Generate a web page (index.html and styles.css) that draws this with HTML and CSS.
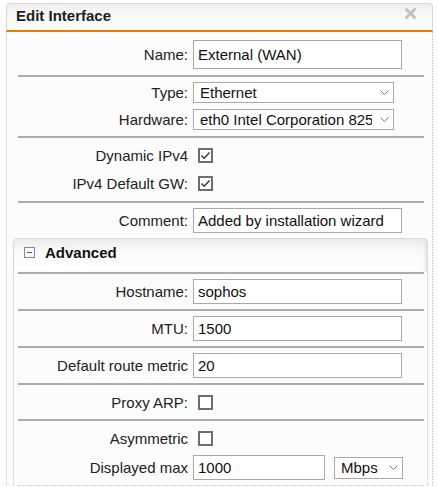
FILE: index.html
```html
<!DOCTYPE html>
<html>
<head>
<meta charset="utf-8">
<link rel="stylesheet" href="styles.css">
</head>
<body>
<div class="dialog">
  <div class="titlebar">
    <span class="title">Edit Interface</span>
    <svg class="close" width="11" height="11" viewBox="0 0 11 11"><path d="M1.5 1.5 L9.5 9.5 M9.5 1.5 L1.5 9.5" stroke="#c2c2c2" stroke-width="3" stroke-linecap="round"/></svg>
  </div>
  <div class="panel">
    <div class="group g-name">
      <div class="row"><label class="lbl">Name:</label><input class="inp inp-name" value="External (WAN)"></div>
    </div>
    <div class="group g-type">
      <div class="row"><label class="lbl">Type:</label>
        <div class="sel sel-type"><select><option>Ethernet</option></select><svg class="chev" width="9" height="5" viewBox="0 0 9 5"><path d="M0.5 0.5 L4.5 4.5 L8.5 0.5" fill="none" stroke="#777" stroke-width="1"/></svg></div>
      </div>
      <div class="row"><label class="lbl">Hardware:</label>
        <div class="sel sel-type"><select><option>eth0 Intel Corporation 82574L Gigabit Network Connection</option></select><svg class="chev" width="9" height="5" viewBox="0 0 9 5"><path d="M0.5 0.5 L4.5 4.5 L8.5 0.5" fill="none" stroke="#777" stroke-width="1"/></svg></div>
      </div>
    </div>
    <div class="group g-checks">
      <div class="row cbrow"><label class="lbl">Dynamic IPv4</label><span class="cb"><svg width="11" height="11" viewBox="0 0 11 11"><path d="M1.5 5.5 L4.2 8.2 L9.5 2.5" fill="none" stroke="#333" stroke-width="1.4"/></svg></span></div>
      <div class="row cbrow"><label class="lbl">IPv4 Default GW:</label><span class="cb"><svg width="11" height="11" viewBox="0 0 11 11"><path d="M1.5 5.5 L4.2 8.2 L9.5 2.5" fill="none" stroke="#333" stroke-width="1.4"/></svg></span></div>
    </div>
    <div class="group g-comment">
      <div class="row"><label class="lbl">Comment:</label><input class="inp inp-wide" value="Added by installation wizard"></div>
    </div>
    <div class="adv">
      <div class="adv-head"><span class="minus"></span><span class="adv-title">Advanced</span></div>
      <div class="adv-body">
        <div class="agroup g-field">
          <div class="row"><label class="lbl">Hostname:</label><input class="inp inp-wide" value="sophos"></div>
        </div>
        <div class="agroup g-field">
          <div class="row"><label class="lbl">MTU:</label><input class="inp inp-wide" value="1500"></div>
        </div>
        <div class="agroup g-field">
          <div class="row"><label class="lbl">Default route metric</label><input class="inp inp-wide" value="20"></div>
        </div>
        <div class="agroup g-proxy">
          <div class="row cbrow"><label class="lbl">Proxy ARP:</label><span class="cb"></span></div>
        </div>
        <div class="agroup g-last">
          <div class="row cbrow"><label class="lbl">Asymmetric</label><span class="cb"></span></div>
          <div class="row"><label class="lbl">Displayed max</label><input class="inp inp-max" value="1000">
            <div class="sel sel-unit"><select><option>Mbps</option></select><svg class="chev" width="9" height="5" viewBox="0 0 9 5"><path d="M0.5 0.5 L4.5 4.5 L8.5 0.5" fill="none" stroke="#777" stroke-width="1"/></svg></div>
          </div>
        </div>
      </div>
    </div>
  </div>
</div>
</body>
</html>
```

FILE: styles.css
```css
* { box-sizing: border-box; }
html, body { margin: 0; padding: 0; }
body {
  background: #fff;
  font-family: "Liberation Sans", Arial, sans-serif;
  font-size: 15px;
  color: #222;
}
.dialog {
  margin: 3px 0 0 6px;
  width: 427px;
}
.titlebar {
  height: 29px;
  border: 1px solid #d6d6d6;
  border-bottom: 2px solid #ea7d00;
  border-radius: 4px 4px 0 0;
  background: linear-gradient(#efefef, #fbfbfb 55%, #fdfdfd);
  display: flex;
  justify-content: space-between;
  align-items: flex-start;
  padding: 3px 16px 0 9px;
}
.title {
  font-weight: bold;
  line-height: 17px;
  color: #1e1e1e;
}
.close { margin-top: 1px; }
.panel {
  border-left: 1px dotted #c6c6c6;
  border-right: 1px dotted #c6c6c6;
  background: #fcfcfc;
  min-height: 460px;
}
.group {
  margin: 0 8px 0 11px;
  border-bottom: 2px solid #acacac;
}
.row {
  display: flex;
  align-items: center;
}
.cbrow { height: 15px; }
.lbl {
  width: 170px;
  flex: none;
  text-align: right;
  margin-right: 5px;
  line-height: 15px;
  white-space: nowrap;
}
.inp {
  display: block;
  height: 25px;
  border: 1px solid #a9a9a9;
  background: #fff;
  padding: 0 0 0 4px;
  font-family: inherit;
  font-size: 15px;
  color: #111;
  margin: 0;
  outline: none;
}
.inp-name { width: 209px; height: 29px; }
.inp-wide { width: 209px; }
.inp-max { width: 132px; }
.sel { position: relative; flex: none; }
.sel select {
  -webkit-appearance: none;
  appearance: none;
  display: block;
  width: 100%;
  height: 100%;
  border: 1px solid #a9a9a9;
  border-radius: 0;
  background: #fff;
  font-family: inherit;
  font-size: 15px;
  color: #111;
  padding: 0 21px 0 6px;
  margin: 0;
  outline: none;
}
.chev {
  position: absolute;
  right: 5px;
  top: 8px;
  pointer-events: none;
}
.sel-type { width: 201px; height: 21px; }
.sel-unit { width: 69px; height: 22px; margin-left: 9px; }
.sel-unit select { padding-left: 6px; }
.cb {
  width: 15px;
  height: 15px;
  border: 2px solid #6e6e6e;
  background: #fff;
  margin-left: 5px;
  flex: none;
  display: flex;
  align-items: center;
  justify-content: center;
}
.cb svg { display: block; }
.g-name { padding: 8px 0 6px; }
.g-type { padding: 5px 0 6px; display: flex; flex-direction: column; gap: 6px; }
.g-checks { padding: 10px 0 10px; display: flex; flex-direction: column; gap: 13px; }
.g-comment { padding: 5px 0 5px; border-bottom: none; }
.adv {
  margin: 0 4px 0 6px;
}
.adv-head {
  height: 34px;
  border: 1px solid #d9d9d9;
  border-bottom: none;
  border-radius: 5px 5px 0 0;
  background: linear-gradient(#ececec, #fafafa 40%, #ffffff);
  box-shadow: inset -3px 0 3px -1px #e2e2e2;
  display: flex;
  align-items: flex-start;
  padding: 5px 0 0 10px;
}
.minus {
  width: 11px;
  height: 11px;
  border: 1px solid #8a8a8a;
  background: #f6f6f6;
  margin-top: 3px;
  position: relative;
  flex: none;
}
.minus::after {
  content: "";
  position: absolute;
  left: 2px;
  right: 2px;
  top: 4px;
  height: 1px;
  background: #555;
}
.adv-title {
  font-weight: bold;
  line-height: 17px;
  margin-left: 10px;
  color: #111;
}
.adv-body {
  border-left: 1px dotted #c6c6c6;
  border-right: 1px dotted #c6c6c6;
}
.agroup {
  margin: 0 3px 0 4px;
  border-top: 2px solid #acacac;
}
.g-field { padding: 5px 0 5px; }
.g-proxy { padding: 10px 0 9px; }
.g-last {
  padding: 10px 0 5px;
  display: flex;
  flex-direction: column;
  gap: 9px;
  border-bottom: 1px dotted #c6c6c6;
}
```
